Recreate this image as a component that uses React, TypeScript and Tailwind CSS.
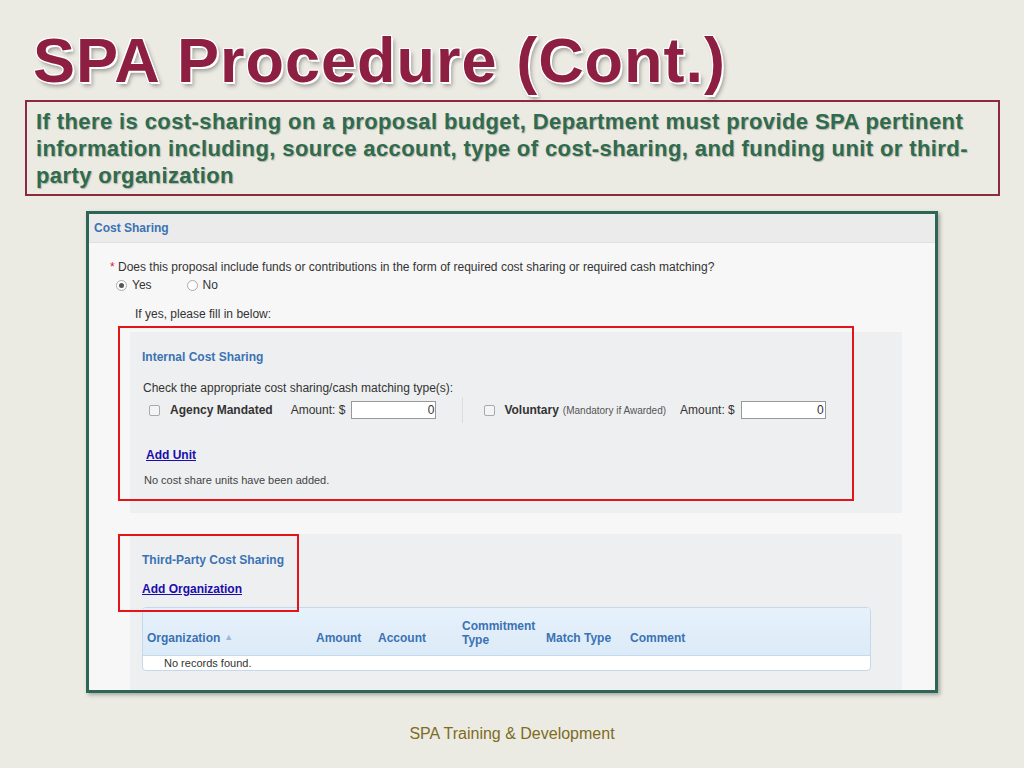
export default function App() {
  return (
    <div className="w-[1024px] h-[768px] bg-[#ecebe3] relative overflow-hidden" style={{ fontFamily: '"Liberation Sans", Arial, sans-serif' }}>
      <h1
        className="absolute left-[33px] top-[22px] text-[63px] leading-[76px] font-bold text-[#8c1f42] tracking-[1px]"
        style={{ textShadow: "2px 2px 0 #fff, -1px -1px 0 #fff, 1px -1px 0 #fff, -1px 1px 0 #fff, 3px 4px 4px rgba(0,0,0,0.35)" }}
      >
        SPA Procedure (Cont.)
      </h1>

      <div className="absolute left-[25px] top-[100px] w-[975px] h-[96px] border-2 border-[#8c2a3e] px-[9px] pt-[6px]">
        <p className="text-[22px] leading-[27px] font-bold text-[#2f6b4f] tracking-[0.4px]" style={{ textShadow: "1px 1px 1px rgba(0,0,0,0.25)" }}>
          If there is cost-sharing on a proposal budget, Department must provide SPA pertinent information including, source account, type of cost-sharing, and funding unit or third-party organization
        </p>
      </div>

      <div className="absolute left-[86px] top-[211px] w-[852px] h-[482px] border-[3px] border-[#2e6655] bg-[#f7f7f7] text-[12px] text-[#333] overflow-hidden shadow-[2px_2px_4px_rgba(0,0,0,0.3)]">
        <div className="h-[29px] bg-[#ebebeb] border-b border-[#e0e0e0] px-[5px] flex items-center">
          <span className="font-bold text-[#3b72b4]">Cost Sharing</span>
        </div>

        <div className="pl-[21px] pt-[15px]">
          <div><span className="text-[#d22]">*</span> Does this proposal include funds or contributions in the form of required cost sharing or required cash matching?</div>
          <div className="flex items-center gap-[5px] mt-[0px] ml-[6px]">
            <span className="w-[11px] h-[11px] rounded-full border border-[#aaa] bg-white flex items-center justify-center">
              <span className="w-[5px] h-[5px] rounded-full bg-[#555]" />
            </span>
            <span className="mr-[30px]">Yes</span>
            <span className="w-[11px] h-[11px] rounded-full border border-[#aaa] bg-white" />
            <span>No</span>
          </div>
          <div className="ml-[25px] mt-[11px]">If yes, please fill in below:</div>
        </div>

        <div className="ml-[41px] mr-[33px] mt-[9px] h-[181px] bg-[#eeeff0] relative pl-[12px] pt-[16px]">
          <div className="absolute left-[-12px] top-[-6px] w-[736px] h-[175px] border-2 border-[#e4141b]" />
          <div className="font-bold text-[#3b72b4]">Internal Cost Sharing</div>
          <div className="mt-[13px] ml-[1px]">Check the appropriate cost sharing/cash matching type(s):</div>
          <div className="flex items-center mt-[0px] ml-[7px] h-[26px]">
            <span className="w-[11px] h-[11px] border border-[#aaa] rounded-[2px] bg-[#f4f4f4]" />
            <span className="ml-[10px] font-bold">Agency Mandated</span>
            <span className="ml-[18px]">Amount: $</span>
            <span className="ml-[6px] w-[85px] h-[18px] bg-white border border-[#999] text-right pr-[1px] leading-[16px]">0</span>
            <span className="ml-[26px] w-px h-[26px] bg-[#ddd]" />
            <span className="ml-[21px] w-[11px] h-[11px] border border-[#aaa] rounded-[2px] bg-[#f4f4f4]" />
            <span className="ml-[9px] font-bold">Voluntary</span>
            <span className="ml-[4px] text-[10px] text-[#555]">(Mandatory if Awarded)</span>
            <span className="ml-[14px]">Amount: $</span>
            <span className="ml-[6px] w-[85px] h-[18px] bg-white border border-[#999] text-right pr-[1px] leading-[16px]">0</span>
          </div>
          <div className="mt-[23px] ml-[4px] font-bold text-[#1a0dab] underline">Add Unit</div>
          <div className="mt-[8px] ml-[2px] text-[11px] text-[#444]">No cost share units have been added.</div>
        </div>

        <div className="ml-[41px] mr-[33px] mt-[21px] h-[160px] bg-[#eeeff0] relative pl-[12px] pt-[17px]">
          <div className="absolute left-[-12px] top-[0px] w-[181px] h-[78px] border-2 border-[#e4141b]" />
          <div className="font-bold text-[#3b72b4]">Third-Party Cost Sharing</div>
          <div className="mt-[11px] font-bold text-[#1a0dab] underline">Add Organization</div>
          <div className="mt-[9px] w-[729px] rounded-[4px] border border-[#c5d9ec] overflow-hidden bg-white">
            <div className="h-[48px] bg-gradient-to-b from-[#e6f1fb] to-[#dcebf8] border-b border-[#c5d9ec] flex items-end pb-[8px] font-bold text-[#3b72b4]">
              <span className="ml-[4px] w-[169px] flex items-center gap-[4px]">Organization <span className="text-[#9bb8d6] text-[9px]">▲</span></span>
              <span className="w-[62px]">Amount</span>
              <span className="w-[84px]">Account</span>
              <span className="w-[84px] leading-[14px]">Commitment<br />Type</span>
              <span className="w-[84px]">Match Type</span>
              <span>Comment</span>
            </div>
            <div className="h-[14px] leading-[14px] pl-[21px] text-[11px] text-[#333]">No records found.</div>
          </div>
        </div>
      </div>

      <div className="absolute left-0 right-0 top-[722px] text-center text-[16px] text-[#7d6b1e]">SPA Training &amp; Development</div>
    </div>
  );
}
